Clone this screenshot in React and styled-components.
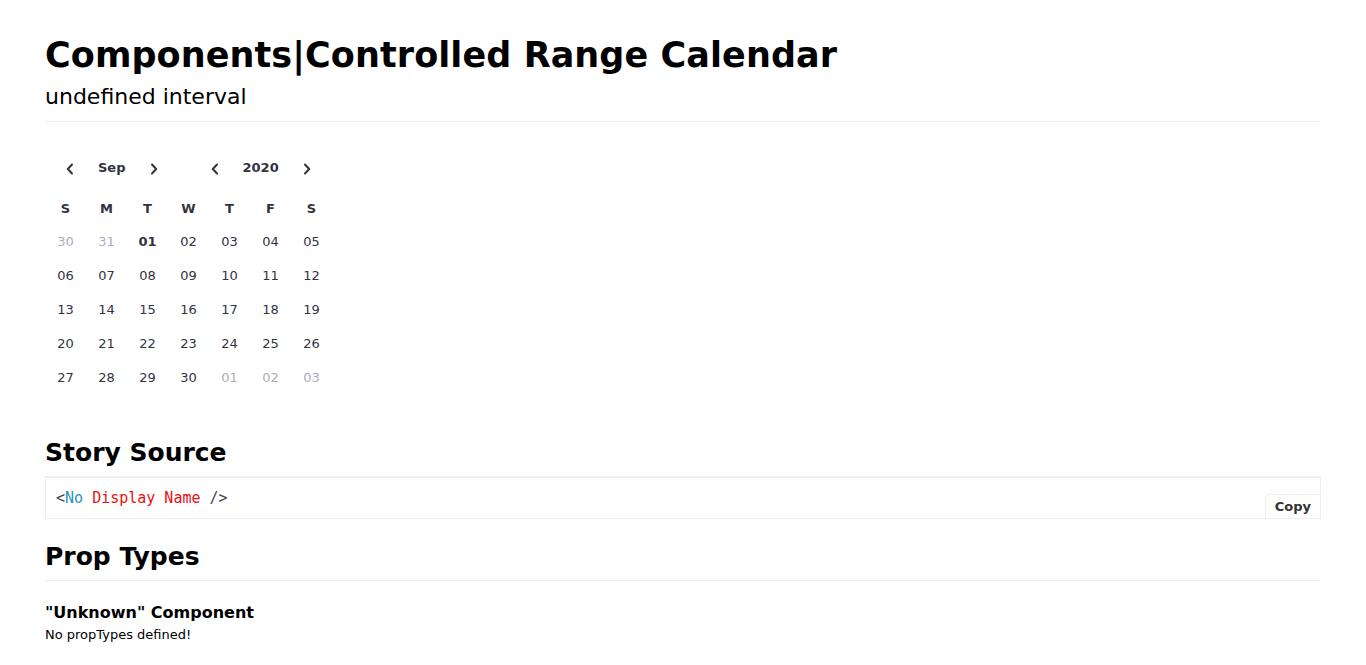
import React, { useState } from 'react'
import styled, { createGlobalStyle } from 'styled-components'

const GlobalStyle = createGlobalStyle`
  html, body {
    margin: 0;
    padding: 0;
    background: #fff;
  }
  body {
    font-family: "DejaVu Sans", "Liberation Sans", sans-serif;
    color: #000;
    line-height: 1.45;
  }
`

const Page = styled.div`
  padding: 30px 45px 20px 45px;
`

const Header = styled.header`
  border-bottom: 1px solid #eee;
  margin-bottom: 34px;
`

const Title = styled.h1`
  margin: 0;
  font-size: 35px;
  font-weight: 700;
  letter-spacing: 0.08px;
`

const Subtitle = styled.h2`
  margin: 0 0 8px 0;
  font-size: 22px;
  font-weight: 400;
`

const Calendar = styled.div`
  width: 287px;
  color: #333340;
  font-size: 13px;
`

const Nav = styled.div`
  display: flex;
  align-items: center;
  gap: 31px;
  padding-left: 10px;
  height: 26px;
`

const NavGroup = styled.div`
  display: flex;
  align-items: center;
`

const ArrowButton = styled.button`
  width: 30px;
  height: 26px;
  padding: 0;
  border: 0;
  background: transparent;
  display: flex;
  align-items: center;
  justify-content: center;
  color: #333340;
  cursor: pointer;
`

const NavLabel = styled.span`
  padding: 0 13px;
  font-weight: 700;
  font-size: 13px;
`

const Grid = styled.div`
  display: grid;
  grid-template-columns: repeat(7, 41px);
  grid-template-rows: 32px;
  grid-auto-rows: 34px;
  margin-top: 12px;
`

const WeekDay = styled.div`
  display: flex;
  align-items: center;
  justify-content: center;
  font-weight: 700;
`

const Day = styled.div`
  display: flex;
  align-items: center;
  justify-content: center;
  font-weight: ${p => (p.$bold ? 700 : 400)};
  color: ${p => (p.$muted ? '#aeacbd' : '#333340')};
  cursor: pointer;
`

const SectionTitle = styled.h1`
  margin: ${p => p.$top}px 0 0 0;
  padding: 0 0 5px 0;
  font-size: 25px;
  font-weight: 700;
  border-bottom: 1px solid #eee;
`

const SourceBox = styled.div`
  position: relative;
  border: 1px solid #eee;
  padding: 10px;
  font-family: "DejaVu Sans Mono", "Liberation Mono", monospace;
  font-size: 15px;
  line-height: 20px;
  color: #444;
`

const Tag = styled.span`
  color: ${p => p.$color};
`

const CopyButton = styled.button`
  position: absolute;
  right: -1px;
  bottom: -1px;
  height: 25px;
  padding: 0 9px;
  background: #fff;
  border: 1px solid #eee;
  border-radius: 4px 0 0 0;
  font-family: "DejaVu Sans", sans-serif;
  font-size: 13px;
  font-weight: 700;
  color: #333;
`

const PropHeading = styled.h2`
  margin: 22px 0 0 0;
  font-size: 16px;
  font-weight: 700;
  line-height: 1.3;
`

const PropText = styled.div`
  font-size: 13px;
  line-height: 1.3;
  margin-top: 3px;
`

const Chevron = ({ dir }) => (
  <svg width="8" height="12" viewBox="0 0 8 12" fill="none">
    <path
      d={dir === 'left' ? 'M6 1.5 L1.8 6 L6 10.5' : 'M2 1.5 L6.2 6 L2 10.5'}
      stroke="currentColor"
      strokeWidth="2"
      strokeLinecap="round"
      strokeLinejoin="round"
    />
  </svg>
)

const pad = n => String(n).padStart(2, '0')

const buildDays = () => {
  const days = []
  days.push({ n: 30, muted: true }, { n: 31, muted: true })
  for (let i = 1; i <= 30; i++) days.push({ n: i, bold: i === 1 })
  for (let i = 1; i <= 3; i++) days.push({ n: i, muted: true })
  return days
}

const App = () => {
  const [month] = useState('Sep')
  const [year] = useState(2020)
  const days = buildDays()

  return (
    <Page>
      <GlobalStyle />
      <Header>
        <Title>Components|Controlled Range Calendar</Title>
        <Subtitle>undefined interval</Subtitle>
      </Header>

      <Calendar>
        <Nav>
          <NavGroup>
            <ArrowButton><Chevron dir="left" /></ArrowButton>
            <NavLabel>{month}</NavLabel>
            <ArrowButton><Chevron dir="right" /></ArrowButton>
          </NavGroup>
          <NavGroup>
            <ArrowButton><Chevron dir="left" /></ArrowButton>
            <NavLabel>{year}</NavLabel>
            <ArrowButton><Chevron dir="right" /></ArrowButton>
          </NavGroup>
        </Nav>
        <Grid>
          {['S', 'M', 'T', 'W', 'T', 'F', 'S'].map((d, i) => (
            <WeekDay key={i}>{d}</WeekDay>
          ))}
          {days.map((d, i) => (
            <Day key={i} $muted={d.muted} $bold={d.bold}>{pad(d.n)}</Day>
          ))}
        </Grid>
      </Calendar>

      <SectionTitle $top={39}>Story Source</SectionTitle>
      <SourceBox>
        <Tag $color="#444">&lt;</Tag>
        <Tag $color="#2a93b8">No</Tag>{' '}
        <Tag $color="#e8110f">Display Name</Tag>{' '}
        <Tag $color="#444">/&gt;</Tag>
        <CopyButton>Copy</CopyButton>
      </SourceBox>

      <SectionTitle $top={20}>Prop Types</SectionTitle>
      <PropHeading>"Unknown" Component</PropHeading>
      <PropText>No propTypes defined!</PropText>
    </Page>
  )
}

export default App
